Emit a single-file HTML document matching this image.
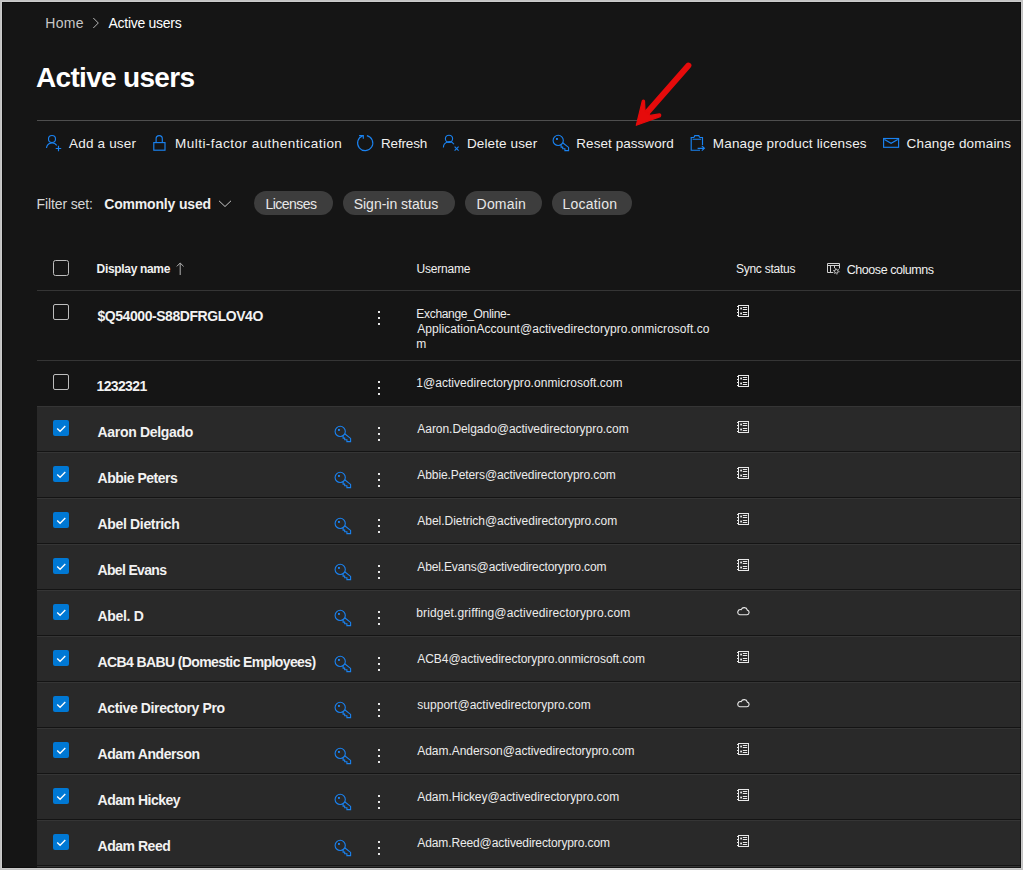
<!DOCTYPE html>
<html><head><meta charset="utf-8"><style>
html,body{margin:0;padding:0}
body{width:1023px;height:870px;overflow:hidden;background:#c2c2c2;position:relative;font-family:"Liberation Sans", sans-serif}
#frame{position:absolute;left:2px;top:2px;width:1019px;height:866px;background:#151515;overflow:hidden}
#c{position:absolute;left:-2px;top:-2px;width:1023px;height:870px}
#ov{position:absolute;left:2px;top:2px;width:1019px;height:866px;box-sizing:border-box;border:1px solid rgba(0,0,0,0.42)}
.t{position:absolute;white-space:pre}
</style></head><body>
<div style="position:absolute;left:1px;top:1px;width:1021px;height:868px;background:#cbcbcb"></div>
<div id="frame"><div id="c">
<div style="position:absolute;left:37px;top:120px;width:984px;height:1px;background:#4e4e4e"></div>
<div style="position:absolute;left:254px;top:191px;width:79px;height:24px;border-radius:12px;background:#3d3d3d"></div><div style="position:absolute;left:343px;top:191px;width:112px;height:24px;border-radius:12px;background:#3d3d3d"></div><div style="position:absolute;left:465px;top:191px;width:77px;height:24px;border-radius:12px;background:#3d3d3d"></div><div style="position:absolute;left:552px;top:191px;width:80px;height:24px;border-radius:12px;background:#3d3d3d"></div>
<div style="position:absolute;left:37px;top:290px;width:984px;height:1px;background:#353535"></div><div style="position:absolute;left:53px;top:304px;width:16px;height:16px;border-radius:2px;border:1px solid #bdbdbd;box-sizing:border-box"></div><div style="position:absolute;left:378px;top:311px;width:2px;height:2px;background:#e6e6e6"></div><div style="position:absolute;left:378px;top:317px;width:2px;height:2px;background:#e6e6e6"></div><div style="position:absolute;left:378px;top:323px;width:2px;height:2px;background:#e6e6e6"></div><svg style="position:absolute;left:737px;top:305px" width="13" height="13" viewBox="0 0 13 13"><g fill="none" stroke="#e8e8e8" stroke-width="1"><rect x="1.5" y="0.5" width="10" height="11"/><path d="M5.8 2.5 H10.2 M5.8 4.5 H10.2 M5.8 7.5 H10.2 M5.8 9.5 H10.2 M0 1.5 H1.5 M0 4.5 H1.5 M0 7.5 H1.5 M0 10.5 H1.5"/></g><g fill="#e8e8e8"><rect x="3.2" y="2.6" width="1.8" height="1.8"/><rect x="3.2" y="7.6" width="1.8" height="1.8"/></g></svg><div style="position:absolute;left:37px;top:360px;width:984px;height:1px;background:#353535"></div><div style="position:absolute;left:53px;top:374px;width:16px;height:16px;border-radius:2px;border:1px solid #bdbdbd;box-sizing:border-box"></div><div style="position:absolute;left:378px;top:381px;width:2px;height:2px;background:#e6e6e6"></div><div style="position:absolute;left:378px;top:387px;width:2px;height:2px;background:#e6e6e6"></div><div style="position:absolute;left:378px;top:393px;width:2px;height:2px;background:#e6e6e6"></div><svg style="position:absolute;left:737px;top:375px" width="13" height="13" viewBox="0 0 13 13"><g fill="none" stroke="#e8e8e8" stroke-width="1"><rect x="1.5" y="0.5" width="10" height="11"/><path d="M5.8 2.5 H10.2 M5.8 4.5 H10.2 M5.8 7.5 H10.2 M5.8 9.5 H10.2 M0 1.5 H1.5 M0 4.5 H1.5 M0 7.5 H1.5 M0 10.5 H1.5"/></g><g fill="#e8e8e8"><rect x="3.2" y="2.6" width="1.8" height="1.8"/><rect x="3.2" y="7.6" width="1.8" height="1.8"/></g></svg><div style="position:absolute;left:37px;top:406px;width:984px;height:1px;background:#353535"></div><div style="position:absolute;left:37px;top:407px;width:984px;height:44px;background:#292929"></div><div style="position:absolute;left:37px;top:451px;width:984px;height:1px;background:#141414"></div><div style="position:absolute;left:53px;top:420px;width:16px;height:16px;border-radius:2px;background:#0078d4"></div><svg style="position:absolute;left:53px;top:420px" width="16" height="16" viewBox="0 0 16 16"><path d="M4.2 8.4 L7.1 11.2 L12.3 6.1" fill="none" stroke="#fff" stroke-width="1.35"/></svg><svg style="position:absolute;left:330px;top:422px" width="22" height="22" viewBox="0 0 22 22"><g fill="none" stroke="#1a82f0" stroke-width="1.1"><circle cx="10.2" cy="9.4" r="5.1"/><path d="M14.7 11.8 L20.6 16.4 V19.6 H16.9 V17.8 H14.7 V16.1 H13.1 V14"/></g><rect x="8" y="7" width="1.9" height="1.9" fill="#1a82f0"/></svg><div style="position:absolute;left:378px;top:427px;width:2px;height:2px;background:#e6e6e6"></div><div style="position:absolute;left:378px;top:433px;width:2px;height:2px;background:#e6e6e6"></div><div style="position:absolute;left:378px;top:439px;width:2px;height:2px;background:#e6e6e6"></div><svg style="position:absolute;left:737px;top:421px" width="13" height="13" viewBox="0 0 13 13"><g fill="none" stroke="#e8e8e8" stroke-width="1"><rect x="1.5" y="0.5" width="10" height="11"/><path d="M5.8 2.5 H10.2 M5.8 4.5 H10.2 M5.8 7.5 H10.2 M5.8 9.5 H10.2 M0 1.5 H1.5 M0 4.5 H1.5 M0 7.5 H1.5 M0 10.5 H1.5"/></g><g fill="#e8e8e8"><rect x="3.2" y="2.6" width="1.8" height="1.8"/><rect x="3.2" y="7.6" width="1.8" height="1.8"/></g></svg><div style="position:absolute;left:37px;top:452px;width:984px;height:1px;background:#353535"></div><div style="position:absolute;left:37px;top:453px;width:984px;height:44px;background:#292929"></div><div style="position:absolute;left:37px;top:497px;width:984px;height:1px;background:#141414"></div><div style="position:absolute;left:53px;top:466px;width:16px;height:16px;border-radius:2px;background:#0078d4"></div><svg style="position:absolute;left:53px;top:466px" width="16" height="16" viewBox="0 0 16 16"><path d="M4.2 8.4 L7.1 11.2 L12.3 6.1" fill="none" stroke="#fff" stroke-width="1.35"/></svg><svg style="position:absolute;left:330px;top:468px" width="22" height="22" viewBox="0 0 22 22"><g fill="none" stroke="#1a82f0" stroke-width="1.1"><circle cx="10.2" cy="9.4" r="5.1"/><path d="M14.7 11.8 L20.6 16.4 V19.6 H16.9 V17.8 H14.7 V16.1 H13.1 V14"/></g><rect x="8" y="7" width="1.9" height="1.9" fill="#1a82f0"/></svg><div style="position:absolute;left:378px;top:473px;width:2px;height:2px;background:#e6e6e6"></div><div style="position:absolute;left:378px;top:479px;width:2px;height:2px;background:#e6e6e6"></div><div style="position:absolute;left:378px;top:485px;width:2px;height:2px;background:#e6e6e6"></div><svg style="position:absolute;left:737px;top:467px" width="13" height="13" viewBox="0 0 13 13"><g fill="none" stroke="#e8e8e8" stroke-width="1"><rect x="1.5" y="0.5" width="10" height="11"/><path d="M5.8 2.5 H10.2 M5.8 4.5 H10.2 M5.8 7.5 H10.2 M5.8 9.5 H10.2 M0 1.5 H1.5 M0 4.5 H1.5 M0 7.5 H1.5 M0 10.5 H1.5"/></g><g fill="#e8e8e8"><rect x="3.2" y="2.6" width="1.8" height="1.8"/><rect x="3.2" y="7.6" width="1.8" height="1.8"/></g></svg><div style="position:absolute;left:37px;top:498px;width:984px;height:1px;background:#353535"></div><div style="position:absolute;left:37px;top:499px;width:984px;height:44px;background:#292929"></div><div style="position:absolute;left:37px;top:543px;width:984px;height:1px;background:#141414"></div><div style="position:absolute;left:53px;top:512px;width:16px;height:16px;border-radius:2px;background:#0078d4"></div><svg style="position:absolute;left:53px;top:512px" width="16" height="16" viewBox="0 0 16 16"><path d="M4.2 8.4 L7.1 11.2 L12.3 6.1" fill="none" stroke="#fff" stroke-width="1.35"/></svg><svg style="position:absolute;left:330px;top:514px" width="22" height="22" viewBox="0 0 22 22"><g fill="none" stroke="#1a82f0" stroke-width="1.1"><circle cx="10.2" cy="9.4" r="5.1"/><path d="M14.7 11.8 L20.6 16.4 V19.6 H16.9 V17.8 H14.7 V16.1 H13.1 V14"/></g><rect x="8" y="7" width="1.9" height="1.9" fill="#1a82f0"/></svg><div style="position:absolute;left:378px;top:519px;width:2px;height:2px;background:#e6e6e6"></div><div style="position:absolute;left:378px;top:525px;width:2px;height:2px;background:#e6e6e6"></div><div style="position:absolute;left:378px;top:531px;width:2px;height:2px;background:#e6e6e6"></div><svg style="position:absolute;left:737px;top:513px" width="13" height="13" viewBox="0 0 13 13"><g fill="none" stroke="#e8e8e8" stroke-width="1"><rect x="1.5" y="0.5" width="10" height="11"/><path d="M5.8 2.5 H10.2 M5.8 4.5 H10.2 M5.8 7.5 H10.2 M5.8 9.5 H10.2 M0 1.5 H1.5 M0 4.5 H1.5 M0 7.5 H1.5 M0 10.5 H1.5"/></g><g fill="#e8e8e8"><rect x="3.2" y="2.6" width="1.8" height="1.8"/><rect x="3.2" y="7.6" width="1.8" height="1.8"/></g></svg><div style="position:absolute;left:37px;top:544px;width:984px;height:1px;background:#353535"></div><div style="position:absolute;left:37px;top:545px;width:984px;height:44px;background:#292929"></div><div style="position:absolute;left:37px;top:589px;width:984px;height:1px;background:#141414"></div><div style="position:absolute;left:53px;top:558px;width:16px;height:16px;border-radius:2px;background:#0078d4"></div><svg style="position:absolute;left:53px;top:558px" width="16" height="16" viewBox="0 0 16 16"><path d="M4.2 8.4 L7.1 11.2 L12.3 6.1" fill="none" stroke="#fff" stroke-width="1.35"/></svg><svg style="position:absolute;left:330px;top:560px" width="22" height="22" viewBox="0 0 22 22"><g fill="none" stroke="#1a82f0" stroke-width="1.1"><circle cx="10.2" cy="9.4" r="5.1"/><path d="M14.7 11.8 L20.6 16.4 V19.6 H16.9 V17.8 H14.7 V16.1 H13.1 V14"/></g><rect x="8" y="7" width="1.9" height="1.9" fill="#1a82f0"/></svg><div style="position:absolute;left:378px;top:565px;width:2px;height:2px;background:#e6e6e6"></div><div style="position:absolute;left:378px;top:571px;width:2px;height:2px;background:#e6e6e6"></div><div style="position:absolute;left:378px;top:577px;width:2px;height:2px;background:#e6e6e6"></div><svg style="position:absolute;left:737px;top:559px" width="13" height="13" viewBox="0 0 13 13"><g fill="none" stroke="#e8e8e8" stroke-width="1"><rect x="1.5" y="0.5" width="10" height="11"/><path d="M5.8 2.5 H10.2 M5.8 4.5 H10.2 M5.8 7.5 H10.2 M5.8 9.5 H10.2 M0 1.5 H1.5 M0 4.5 H1.5 M0 7.5 H1.5 M0 10.5 H1.5"/></g><g fill="#e8e8e8"><rect x="3.2" y="2.6" width="1.8" height="1.8"/><rect x="3.2" y="7.6" width="1.8" height="1.8"/></g></svg><div style="position:absolute;left:37px;top:590px;width:984px;height:1px;background:#353535"></div><div style="position:absolute;left:37px;top:591px;width:984px;height:44px;background:#292929"></div><div style="position:absolute;left:37px;top:635px;width:984px;height:1px;background:#141414"></div><div style="position:absolute;left:53px;top:604px;width:16px;height:16px;border-radius:2px;background:#0078d4"></div><svg style="position:absolute;left:53px;top:604px" width="16" height="16" viewBox="0 0 16 16"><path d="M4.2 8.4 L7.1 11.2 L12.3 6.1" fill="none" stroke="#fff" stroke-width="1.35"/></svg><svg style="position:absolute;left:330px;top:606px" width="22" height="22" viewBox="0 0 22 22"><g fill="none" stroke="#1a82f0" stroke-width="1.1"><circle cx="10.2" cy="9.4" r="5.1"/><path d="M14.7 11.8 L20.6 16.4 V19.6 H16.9 V17.8 H14.7 V16.1 H13.1 V14"/></g><rect x="8" y="7" width="1.9" height="1.9" fill="#1a82f0"/></svg><div style="position:absolute;left:378px;top:611px;width:2px;height:2px;background:#e6e6e6"></div><div style="position:absolute;left:378px;top:617px;width:2px;height:2px;background:#e6e6e6"></div><div style="position:absolute;left:378px;top:623px;width:2px;height:2px;background:#e6e6e6"></div><svg style="position:absolute;left:736px;top:607px" width="15" height="10" viewBox="0 0 15 10"><path d="M3.8 7.8 H11 A2.4 2.4 0 0 0 11.3 3.1 A3.2 3.2 0 0 0 5.2 2.6 A2.6 2.6 0 0 0 3.8 7.8 Z" fill="none" stroke="#e8e8e8" stroke-width="1.1"/></svg><div style="position:absolute;left:37px;top:636px;width:984px;height:1px;background:#353535"></div><div style="position:absolute;left:37px;top:637px;width:984px;height:44px;background:#292929"></div><div style="position:absolute;left:37px;top:681px;width:984px;height:1px;background:#141414"></div><div style="position:absolute;left:53px;top:650px;width:16px;height:16px;border-radius:2px;background:#0078d4"></div><svg style="position:absolute;left:53px;top:650px" width="16" height="16" viewBox="0 0 16 16"><path d="M4.2 8.4 L7.1 11.2 L12.3 6.1" fill="none" stroke="#fff" stroke-width="1.35"/></svg><svg style="position:absolute;left:330px;top:652px" width="22" height="22" viewBox="0 0 22 22"><g fill="none" stroke="#1a82f0" stroke-width="1.1"><circle cx="10.2" cy="9.4" r="5.1"/><path d="M14.7 11.8 L20.6 16.4 V19.6 H16.9 V17.8 H14.7 V16.1 H13.1 V14"/></g><rect x="8" y="7" width="1.9" height="1.9" fill="#1a82f0"/></svg><div style="position:absolute;left:378px;top:657px;width:2px;height:2px;background:#e6e6e6"></div><div style="position:absolute;left:378px;top:663px;width:2px;height:2px;background:#e6e6e6"></div><div style="position:absolute;left:378px;top:669px;width:2px;height:2px;background:#e6e6e6"></div><svg style="position:absolute;left:737px;top:651px" width="13" height="13" viewBox="0 0 13 13"><g fill="none" stroke="#e8e8e8" stroke-width="1"><rect x="1.5" y="0.5" width="10" height="11"/><path d="M5.8 2.5 H10.2 M5.8 4.5 H10.2 M5.8 7.5 H10.2 M5.8 9.5 H10.2 M0 1.5 H1.5 M0 4.5 H1.5 M0 7.5 H1.5 M0 10.5 H1.5"/></g><g fill="#e8e8e8"><rect x="3.2" y="2.6" width="1.8" height="1.8"/><rect x="3.2" y="7.6" width="1.8" height="1.8"/></g></svg><div style="position:absolute;left:37px;top:682px;width:984px;height:1px;background:#353535"></div><div style="position:absolute;left:37px;top:683px;width:984px;height:44px;background:#292929"></div><div style="position:absolute;left:37px;top:727px;width:984px;height:1px;background:#141414"></div><div style="position:absolute;left:53px;top:696px;width:16px;height:16px;border-radius:2px;background:#0078d4"></div><svg style="position:absolute;left:53px;top:696px" width="16" height="16" viewBox="0 0 16 16"><path d="M4.2 8.4 L7.1 11.2 L12.3 6.1" fill="none" stroke="#fff" stroke-width="1.35"/></svg><svg style="position:absolute;left:330px;top:698px" width="22" height="22" viewBox="0 0 22 22"><g fill="none" stroke="#1a82f0" stroke-width="1.1"><circle cx="10.2" cy="9.4" r="5.1"/><path d="M14.7 11.8 L20.6 16.4 V19.6 H16.9 V17.8 H14.7 V16.1 H13.1 V14"/></g><rect x="8" y="7" width="1.9" height="1.9" fill="#1a82f0"/></svg><div style="position:absolute;left:378px;top:703px;width:2px;height:2px;background:#e6e6e6"></div><div style="position:absolute;left:378px;top:709px;width:2px;height:2px;background:#e6e6e6"></div><div style="position:absolute;left:378px;top:715px;width:2px;height:2px;background:#e6e6e6"></div><svg style="position:absolute;left:736px;top:699px" width="15" height="10" viewBox="0 0 15 10"><path d="M3.8 7.8 H11 A2.4 2.4 0 0 0 11.3 3.1 A3.2 3.2 0 0 0 5.2 2.6 A2.6 2.6 0 0 0 3.8 7.8 Z" fill="none" stroke="#e8e8e8" stroke-width="1.1"/></svg><div style="position:absolute;left:37px;top:728px;width:984px;height:1px;background:#353535"></div><div style="position:absolute;left:37px;top:729px;width:984px;height:44px;background:#292929"></div><div style="position:absolute;left:37px;top:773px;width:984px;height:1px;background:#141414"></div><div style="position:absolute;left:53px;top:742px;width:16px;height:16px;border-radius:2px;background:#0078d4"></div><svg style="position:absolute;left:53px;top:742px" width="16" height="16" viewBox="0 0 16 16"><path d="M4.2 8.4 L7.1 11.2 L12.3 6.1" fill="none" stroke="#fff" stroke-width="1.35"/></svg><svg style="position:absolute;left:330px;top:744px" width="22" height="22" viewBox="0 0 22 22"><g fill="none" stroke="#1a82f0" stroke-width="1.1"><circle cx="10.2" cy="9.4" r="5.1"/><path d="M14.7 11.8 L20.6 16.4 V19.6 H16.9 V17.8 H14.7 V16.1 H13.1 V14"/></g><rect x="8" y="7" width="1.9" height="1.9" fill="#1a82f0"/></svg><div style="position:absolute;left:378px;top:749px;width:2px;height:2px;background:#e6e6e6"></div><div style="position:absolute;left:378px;top:755px;width:2px;height:2px;background:#e6e6e6"></div><div style="position:absolute;left:378px;top:761px;width:2px;height:2px;background:#e6e6e6"></div><svg style="position:absolute;left:737px;top:743px" width="13" height="13" viewBox="0 0 13 13"><g fill="none" stroke="#e8e8e8" stroke-width="1"><rect x="1.5" y="0.5" width="10" height="11"/><path d="M5.8 2.5 H10.2 M5.8 4.5 H10.2 M5.8 7.5 H10.2 M5.8 9.5 H10.2 M0 1.5 H1.5 M0 4.5 H1.5 M0 7.5 H1.5 M0 10.5 H1.5"/></g><g fill="#e8e8e8"><rect x="3.2" y="2.6" width="1.8" height="1.8"/><rect x="3.2" y="7.6" width="1.8" height="1.8"/></g></svg><div style="position:absolute;left:37px;top:774px;width:984px;height:1px;background:#353535"></div><div style="position:absolute;left:37px;top:775px;width:984px;height:44px;background:#292929"></div><div style="position:absolute;left:37px;top:819px;width:984px;height:1px;background:#141414"></div><div style="position:absolute;left:53px;top:788px;width:16px;height:16px;border-radius:2px;background:#0078d4"></div><svg style="position:absolute;left:53px;top:788px" width="16" height="16" viewBox="0 0 16 16"><path d="M4.2 8.4 L7.1 11.2 L12.3 6.1" fill="none" stroke="#fff" stroke-width="1.35"/></svg><svg style="position:absolute;left:330px;top:790px" width="22" height="22" viewBox="0 0 22 22"><g fill="none" stroke="#1a82f0" stroke-width="1.1"><circle cx="10.2" cy="9.4" r="5.1"/><path d="M14.7 11.8 L20.6 16.4 V19.6 H16.9 V17.8 H14.7 V16.1 H13.1 V14"/></g><rect x="8" y="7" width="1.9" height="1.9" fill="#1a82f0"/></svg><div style="position:absolute;left:378px;top:795px;width:2px;height:2px;background:#e6e6e6"></div><div style="position:absolute;left:378px;top:801px;width:2px;height:2px;background:#e6e6e6"></div><div style="position:absolute;left:378px;top:807px;width:2px;height:2px;background:#e6e6e6"></div><svg style="position:absolute;left:737px;top:789px" width="13" height="13" viewBox="0 0 13 13"><g fill="none" stroke="#e8e8e8" stroke-width="1"><rect x="1.5" y="0.5" width="10" height="11"/><path d="M5.8 2.5 H10.2 M5.8 4.5 H10.2 M5.8 7.5 H10.2 M5.8 9.5 H10.2 M0 1.5 H1.5 M0 4.5 H1.5 M0 7.5 H1.5 M0 10.5 H1.5"/></g><g fill="#e8e8e8"><rect x="3.2" y="2.6" width="1.8" height="1.8"/><rect x="3.2" y="7.6" width="1.8" height="1.8"/></g></svg><div style="position:absolute;left:37px;top:820px;width:984px;height:1px;background:#353535"></div><div style="position:absolute;left:37px;top:821px;width:984px;height:44px;background:#292929"></div><div style="position:absolute;left:37px;top:865px;width:984px;height:1px;background:#141414"></div><div style="position:absolute;left:53px;top:834px;width:16px;height:16px;border-radius:2px;background:#0078d4"></div><svg style="position:absolute;left:53px;top:834px" width="16" height="16" viewBox="0 0 16 16"><path d="M4.2 8.4 L7.1 11.2 L12.3 6.1" fill="none" stroke="#fff" stroke-width="1.35"/></svg><svg style="position:absolute;left:330px;top:836px" width="22" height="22" viewBox="0 0 22 22"><g fill="none" stroke="#1a82f0" stroke-width="1.1"><circle cx="10.2" cy="9.4" r="5.1"/><path d="M14.7 11.8 L20.6 16.4 V19.6 H16.9 V17.8 H14.7 V16.1 H13.1 V14"/></g><rect x="8" y="7" width="1.9" height="1.9" fill="#1a82f0"/></svg><div style="position:absolute;left:378px;top:841px;width:2px;height:2px;background:#e6e6e6"></div><div style="position:absolute;left:378px;top:847px;width:2px;height:2px;background:#e6e6e6"></div><div style="position:absolute;left:378px;top:853px;width:2px;height:2px;background:#e6e6e6"></div><svg style="position:absolute;left:737px;top:835px" width="13" height="13" viewBox="0 0 13 13"><g fill="none" stroke="#e8e8e8" stroke-width="1"><rect x="1.5" y="0.5" width="10" height="11"/><path d="M5.8 2.5 H10.2 M5.8 4.5 H10.2 M5.8 7.5 H10.2 M5.8 9.5 H10.2 M0 1.5 H1.5 M0 4.5 H1.5 M0 7.5 H1.5 M0 10.5 H1.5"/></g><g fill="#e8e8e8"><rect x="3.2" y="2.6" width="1.8" height="1.8"/><rect x="3.2" y="7.6" width="1.8" height="1.8"/></g></svg><div style="position:absolute;left:37px;top:866px;width:984px;height:1px;background:#353535"></div><div style="position:absolute;left:37px;top:867px;width:984px;height:44px;background:#292929"></div><div style="position:absolute;left:37px;top:911px;width:984px;height:1px;background:#141414"></div>
<svg style="position:absolute;left:548px;top:131px" width="22" height="22" viewBox="0 0 22 22"><g fill="none" stroke="#1a82f0" stroke-width="1.1"><circle cx="10.2" cy="9.4" r="5.1"/><path d="M14.7 11.8 L20.6 16.4 V19.6 H16.9 V17.8 H14.7 V16.1 H13.1 V14"/></g><rect x="8" y="7" width="1.9" height="1.9" fill="#1a82f0"/></svg>
<div class="t" style="left:45.30px;top:16.15px;font-size:14px;line-height:14px;font-weight:400;color:#c8c8c8;letter-spacing:0.267px">Home</div><div class="t" style="left:108.50px;top:16.15px;font-size:14px;line-height:14px;font-weight:400;color:#ffffff;letter-spacing:-0.273px">Active users</div><div class="t" style="left:36.00px;top:63.90px;font-size:28px;line-height:28px;font-weight:700;color:#ffffff;letter-spacing:-0.682px">Active users</div><div class="t" style="left:69.00px;top:136.57px;font-size:13.5px;line-height:13.5px;font-weight:400;color:#f0f0f0;letter-spacing:0.189px">Add a user</div><div class="t" style="left:175.00px;top:136.57px;font-size:13.5px;line-height:13.5px;font-weight:400;color:#f0f0f0;letter-spacing:0.473px">Multi-factor authentication</div><div class="t" style="left:381.00px;top:136.57px;font-size:13.5px;line-height:13.5px;font-weight:400;color:#f0f0f0;letter-spacing:-0.167px">Refresh</div><div class="t" style="left:467.00px;top:136.57px;font-size:13.5px;line-height:13.5px;font-weight:400;color:#f0f0f0;letter-spacing:0.120px">Delete user</div><div class="t" style="left:576.30px;top:136.57px;font-size:13.5px;line-height:13.5px;font-weight:400;color:#f0f0f0;letter-spacing:0.054px">Reset password</div><div class="t" style="left:712.80px;top:136.57px;font-size:13.5px;line-height:13.5px;font-weight:400;color:#f0f0f0;letter-spacing:0.168px">Manage product licenses</div><div class="t" style="left:906.50px;top:136.57px;font-size:13.5px;line-height:13.5px;font-weight:400;color:#f0f0f0;letter-spacing:0.192px">Change domains</div><div class="t" style="left:36.50px;top:196.65px;font-size:14px;line-height:14px;font-weight:400;color:#d6d6d6;letter-spacing:-0.110px">Filter set:</div><div class="t" style="left:104.20px;top:196.65px;font-size:14px;line-height:14px;font-weight:700;color:#f0f0f0;letter-spacing:-0.167px">Commonly used</div><div class="t" style="left:265.40px;top:196.65px;font-size:14px;line-height:14px;font-weight:400;color:#e8e8e8;letter-spacing:-0.529px">Licenses</div><div class="t" style="left:353.70px;top:196.65px;font-size:14px;line-height:14px;font-weight:400;color:#e8e8e8;letter-spacing:-0.015px">Sign-in status</div><div class="t" style="left:476.60px;top:196.65px;font-size:14px;line-height:14px;font-weight:400;color:#e8e8e8;letter-spacing:0.180px">Domain</div><div class="t" style="left:562.50px;top:196.65px;font-size:14px;line-height:14px;font-weight:400;color:#e8e8e8;letter-spacing:0.214px">Location</div><div class="t" style="left:96.60px;top:263.34px;font-size:12px;line-height:12px;font-weight:700;color:#f0f0f0;letter-spacing:-0.327px">Display name</div><div class="t" style="left:416.60px;top:263.34px;font-size:12px;line-height:12px;font-weight:400;color:#f0f0f0;letter-spacing:-0.229px">Username</div><div class="t" style="left:735.90px;top:263.34px;font-size:12px;line-height:12px;font-weight:400;color:#f0f0f0;letter-spacing:-0.240px">Sync status</div><div class="t" style="left:846.70px;top:263.62px;font-size:12.5px;line-height:12.5px;font-weight:400;color:#f0f0f0;letter-spacing:-0.438px">Choose columns</div><div class="t" style="left:97.50px;top:309.15px;font-size:14px;line-height:14px;font-weight:700;color:#f2f2f2;letter-spacing:-0.447px">$Q54000-S88DFRGLOV4O</div><div class="t" style="left:416.30px;top:308.04px;font-size:12px;line-height:12px;font-weight:400;color:#ececec;letter-spacing:-0.307px">Exchange_Online-</div><div class="t" style="left:417.30px;top:323.24px;font-size:12px;line-height:12px;font-weight:400;color:#ececec;letter-spacing:0.035px">ApplicationAccount@activedirectorypro.onmicrosoft.co</div><div class="t" style="left:416.30px;top:338.44px;font-size:12px;line-height:12px;font-weight:400;color:#ececec;letter-spacing:0.000px">m</div><div class="t" style="left:96.50px;top:379.15px;font-size:14px;line-height:14px;font-weight:700;color:#f2f2f2;letter-spacing:-0.633px">1232321</div><div class="t" style="left:416.30px;top:377.34px;font-size:12px;line-height:12px;font-weight:400;color:#ececec;letter-spacing:0.037px">1@activedirectorypro.onmicrosoft.com</div><div class="t" style="left:97.50px;top:425.15px;font-size:14px;line-height:14px;font-weight:700;color:#f2f2f2;letter-spacing:-0.308px">Aaron Delgado</div><div class="t" style="left:417.30px;top:423.34px;font-size:12px;line-height:12px;font-weight:400;color:#ececec;letter-spacing:-0.046px">Aaron.Delgado@activedirectorypro.com</div><div class="t" style="left:97.50px;top:471.15px;font-size:14px;line-height:14px;font-weight:700;color:#f2f2f2;letter-spacing:-0.473px">Abbie Peters</div><div class="t" style="left:417.30px;top:469.34px;font-size:12px;line-height:12px;font-weight:400;color:#ececec;letter-spacing:-0.091px">Abbie.Peters@activedirectorypro.com</div><div class="t" style="left:97.50px;top:517.15px;font-size:14px;line-height:14px;font-weight:700;color:#f2f2f2;letter-spacing:-0.333px">Abel Dietrich</div><div class="t" style="left:417.30px;top:515.34px;font-size:12px;line-height:12px;font-weight:400;color:#ececec;letter-spacing:-0.031px">Abel.Dietrich@activedirectorypro.com</div><div class="t" style="left:97.50px;top:563.15px;font-size:14px;line-height:14px;font-weight:700;color:#f2f2f2;letter-spacing:-0.667px">Abel Evans</div><div class="t" style="left:417.30px;top:561.34px;font-size:12px;line-height:12px;font-weight:400;color:#ececec;letter-spacing:-0.138px">Abel.Evans@activedirectorypro.com</div><div class="t" style="left:97.50px;top:609.15px;font-size:14px;line-height:14px;font-weight:700;color:#f2f2f2;letter-spacing:-0.317px">Abel. D</div><div class="t" style="left:416.30px;top:607.34px;font-size:12px;line-height:12px;font-weight:400;color:#ececec;letter-spacing:0.137px">bridget.griffing@activedirectorypro.com</div><div class="t" style="left:97.50px;top:655.15px;font-size:14px;line-height:14px;font-weight:700;color:#f2f2f2;letter-spacing:-0.617px">ACB4 BABU (Domestic Employees)</div><div class="t" style="left:417.30px;top:653.34px;font-size:12px;line-height:12px;font-weight:400;color:#ececec;letter-spacing:-0.050px">ACB4@activedirectorypro.onmicrosoft.com</div><div class="t" style="left:97.50px;top:701.15px;font-size:14px;line-height:14px;font-weight:700;color:#f2f2f2;letter-spacing:-0.368px">Active Directory Pro</div><div class="t" style="left:417.30px;top:699.34px;font-size:12px;line-height:12px;font-weight:400;color:#ececec;letter-spacing:0.017px">support@activedirectorypro.com</div><div class="t" style="left:97.50px;top:747.15px;font-size:14px;line-height:14px;font-weight:700;color:#f2f2f2;letter-spacing:-0.417px">Adam Anderson</div><div class="t" style="left:417.30px;top:745.34px;font-size:12px;line-height:12px;font-weight:400;color:#ececec;letter-spacing:-0.051px">Adam.Anderson@activedirectorypro.com</div><div class="t" style="left:97.50px;top:793.15px;font-size:14px;line-height:14px;font-weight:700;color:#f2f2f2;letter-spacing:-0.480px">Adam Hickey</div><div class="t" style="left:417.30px;top:791.34px;font-size:12px;line-height:12px;font-weight:400;color:#ececec;letter-spacing:-0.052px">Adam.Hickey@activedirectorypro.com</div><div class="t" style="left:97.50px;top:839.15px;font-size:14px;line-height:14px;font-weight:700;color:#f2f2f2;letter-spacing:-0.463px">Adam Reed</div><div class="t" style="left:417.30px;top:837.34px;font-size:12px;line-height:12px;font-weight:400;color:#ececec;letter-spacing:-0.116px">Adam.Reed@activedirectorypro.com</div>

<svg style="position:absolute;left:0;top:0" width="1023" height="870" viewBox="0 0 1023 870">
 <g fill="none" stroke="#1a82f0" stroke-width="1.15">
  <!-- add user -->
  <circle cx="52" cy="139" r="3.5"/>
  <path d="M46.5 148 A5.6 5.6 0 0 1 56.7 145.4"/>
  <path d="M55.7 148.5 H61.2 M58.5 145.8 V151.2"/>
  <!-- lock -->
  <rect x="153.8" y="142.6" width="11.2" height="7.6"/>
  <path d="M156.1 142.6 V138.7 A3.1 3.1 0 0 1 162.3 138.7 V142.6"/>
  <!-- refresh -->
  <path d="M366.9 135.6 A7.6 7.6 0 1 1 362.6 135.86"/>
  <path d="M359.1 135.6 H363.3 V138.8"/>
  <!-- delete user -->
  <circle cx="449" cy="138.8" r="3.6"/>
  <path d="M443.4 147.6 A5.8 5.8 0 0 1 454 144.3"/>
  <path d="M454.6 146.6 L458.6 150.6 M458.6 146.6 L454.6 150.6"/>
  <!-- clipboard -->
  <path d="M702.5 144.9 V137.5 H699.6 M694 137.5 H691.2 V150.2 H700"/>
  <path d="M694 137.5 L694.8 135.6 H698.8 L699.6 137.5 M692.6 139.2 H701.2"/>
  <path d="M697.6 148.3 H704.4 M701.8 145.9 L704.4 148.3 L701.8 150.7"/>
  <!-- mail -->
  <rect x="883.6" y="138.5" width="15" height="8.8"/>
  <path d="M884.4 139.6 L891.1 143.3 L897.8 139.6"/>
 </g>
 <!-- breadcrumb chevron -->
 <path d="M93.3 18 L98.3 23 L93.3 28" fill="none" stroke="#b8b8b8" stroke-width="1"/>
 <!-- filter chevron -->
 <path d="M219 200.8 L225 206.5 L231 200.8" fill="none" stroke="#c8c8c8" stroke-width="1"/>
 <!-- sort arrow -->
 <path d="M180.2 263 V275 M176.8 266.4 L180.2 263 L183.6 266.4" fill="none" stroke="#b0b0b0" stroke-width="1"/>
 <!-- header checkbox -->
 <rect x="53.5" y="260.5" width="15" height="15" rx="2" fill="none" stroke="#bdbdbd" stroke-width="1"/>
 <!-- choose columns icon -->
 <g fill="none" stroke="#d0d0d0" stroke-width="1">
  <path d="M839.5 268.5 V263.5 H827.5 V272.5 H833.2 M827.5 265.5 H839.5 M830.5 266 V272 M834.5 266 V268.2"/>
  <circle cx="836.3" cy="271.3" r="1.8"/>
  <circle cx="836.3" cy="271.3" r="2.8" stroke-dasharray="1.1 1.83" stroke-width="1"/>
 </g>
 <!-- red arrow -->
 <g stroke="#e60b0b" fill="#e60b0b" stroke-linecap="round" stroke-linejoin="round">
  <path d="M688.4 65.6 L645 115" stroke-width="6" fill="none"/>
  <path d="M636.3 125.3 L642.3 100.8 Q643.4 99.4 644.5 100.9 L645 110.6 L650.2 115.4 L659.5 113.9 Q661.6 114.6 660.2 116.6 Z" stroke-width="1.2"/>
 </g>
</svg>

</div></div>
<div id="ov"></div>
</body></html>
